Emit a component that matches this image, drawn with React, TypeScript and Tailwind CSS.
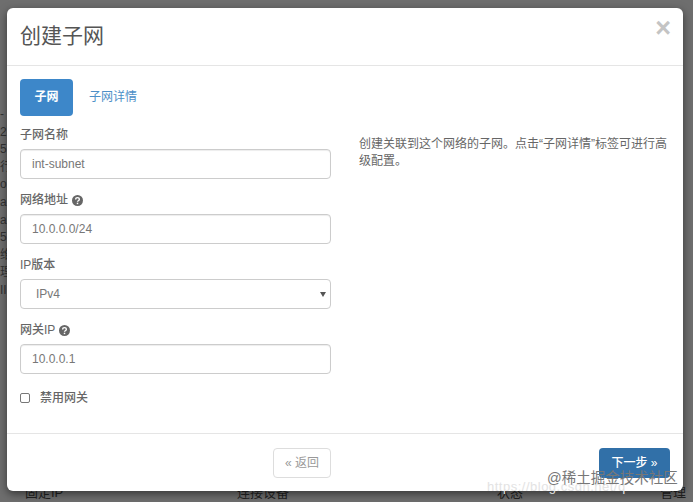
const font = { fontFamily: '"Liberation Sans", "Noto Sans CJK SC", sans-serif' };

function HelpIcon() {
  return (
    <svg width="11" height="11" viewBox="0 0 12 12" className="inline-block">
      <circle cx="6" cy="6" r="6" fill="#666" />
      <path d="M4 4.8c0-2.6 4-2.6 4 0 0 1.5-2 1.4-2 2.6" stroke="#fff" strokeWidth="1.5" fill="none" />
      <rect x="5.2" y="8.4" width="1.6" height="1.6" fill="#fff" />
    </svg>
  );
}

function Field({ label, value, help, className }: { label: string; value: string; help?: boolean; className?: string }) {
  return (
    <div className={className}>
      <div className="flex h-[18px] items-center gap-[4px] text-[12px] font-medium leading-[18px] text-[#666]">
        {label}
        {help && <HelpIcon />}
      </div>
      <div className="mt-[5px] h-[30px] w-[311px] rounded-[4px] border border-[#ccc] bg-white px-[11px] text-[12px] leading-[28px] text-[#777] shadow-[inset_0_1px_1px_rgba(0,0,0,0.075)]">
        {value}
      </div>
    </div>
  );
}

export default function App() {
  return (
    <div style={font} className="relative h-[502px] w-[693px] overflow-hidden bg-[#6e6e6e] pt-[8px]">
      {/* page text behind the dimmed backdrop */}
      <div className="absolute left-0 top-[106px] text-[12px] leading-[17.6px] text-[#333]">
        <div>-</div>
        <div>2</div>
        <div>5</div>
        <div>行</div>
        <div>o</div>
        <div>al</div>
        <div>al</div>
        <div>5</div>
        <div>维</div>
        <div>理</div>
        <div>II</div>
      </div>
      <div className="absolute left-[25px] top-[486px] flex whitespace-nowrap text-[13px] leading-[14px] text-[#222]">
        <span className="w-[212px]">固定IP</span>
        <span className="w-[260px]">连接设备</span>
        <span className="w-[163px]">状态</span>
        <span>管理</span>
      </div>

      <div className="relative ml-[7px] flex h-[483px] w-[676px] flex-col rounded-[6px] bg-white shadow-[0_3px_9px_rgba(0,0,0,0.5)]">
        <header className="relative flex h-[58px] shrink-0 items-center border-b border-[#e5e5e5] pb-[2px] pl-[13px] text-[21px] text-[#555]">
          创建子网
          <span className="absolute right-[12px] top-[5px] text-[27px] font-bold leading-[30px] text-[#c4c4c4]">×</span>
        </header>

        <div className="flex flex-1 px-[13px] pt-[13px]">
          <div className="w-[311px]">
            <nav className="flex items-center text-[12px] font-bold">
              <span className="flex h-[37px] w-[53px] items-center justify-center rounded-[4px] bg-[#3d87c9] pb-[1px] text-white">子网</span>
              <span className="ml-[16px] pb-[1px] font-normal text-[#4d8fc7]">子网详情</span>
            </nav>
            <Field label="子网名称" value="int-subnet" className="mt-[10px]" />
            <Field label="网络地址" value="10.0.0.0/24" help className="mt-[12px]" />
            <div className="mt-[12px]">
              <div className="h-[18px] text-[12px] font-medium leading-[18px] text-[#666]">IP版本</div>
              <div className="mt-[5px] flex h-[30px] items-center justify-between rounded-[4px] border border-[#ccc] pl-[15px] pr-[4px] text-[12px] text-[#777]">
                IPv4
                <span className="h-0 w-0 border-x-[3px] border-t-[5px] border-x-transparent border-t-[#555]" />
              </div>
            </div>
            <Field label="网关IP" value="10.0.0.1" help className="mt-[12px]" />
            <div className="mt-[15px] flex items-center text-[12px] font-medium text-[#666]">
              <span className="h-[10px] w-[10px] rounded-[2px] border border-[#777] bg-white" />
              <span className="ml-[10px]">禁用网关</span>
            </div>
          </div>
          <p className="ml-[28px] mt-[57px] w-[311px] text-[12px] leading-[17px] text-[#666]">
            创建关联到这个网络的子网。点击“子网详情”标签可进行高级配置。
          </p>
        </div>

        <footer className="flex h-[58px] shrink-0 items-start justify-end border-t border-[#e5e5e5] pr-[13px] pt-[14px] text-[12px]">
          <span className="flex h-[30px] w-[58px] items-center justify-center rounded-[4px] border border-[#ddd] text-[#999]">« 返回</span>
          <span className="ml-[268px] flex h-[30px] w-[71px] items-center justify-center rounded-[4px] bg-[#3170a8] font-medium text-white">下一步 »</span>
        </footer>
      </div>

      {/* watermarks over the screenshot */}
      <div className="absolute left-[487px] top-[477px] whitespace-nowrap text-[13px] tracking-[0.5px] text-[#e3e3e3]">https://blog.csdn.net/q</div>
      <div className="absolute left-[547px] top-[468px] text-[14.5px] leading-[20px] text-[#777]">@稀土掘金技术社区</div>
    </div>
  );
}
